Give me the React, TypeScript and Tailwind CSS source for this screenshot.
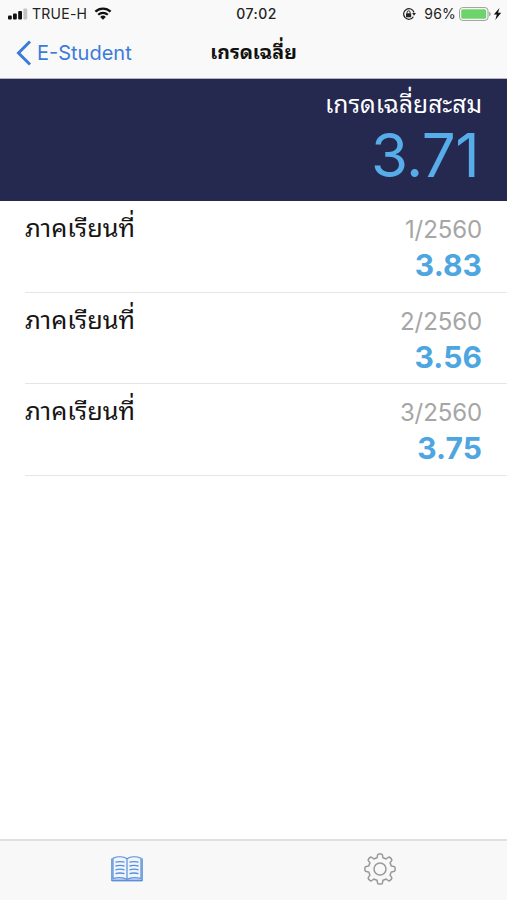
import React from "react";

const latin = "font-['Inter','Liberation_Sans',sans-serif]";
const thai = "font-['Thonburi','Noto_Sans_Thai_Looped','Loma','Garuda','Waree','Umpush','Noto_Sans_Thai',sans-serif]";

const terms = [
  { term: "1/2560", grade: "3.83" },
  { term: "2/2560", grade: "3.56" },
  { term: "3/2560", grade: "3.75" },
];

function Signal() {
  return (
    <svg width="20" height="12" viewBox="0 0 20 12" className="shrink-0">
      <rect x="0" y="7.5" width="3.8" height="4" rx="1" fill="#111" />
      <rect x="5" y="5.5" width="3.8" height="6" rx="1" fill="#111" />
      <rect x="10.2" y="3" width="3.8" height="8.5" rx="1" fill="#111" />
      <rect x="15.4" y="0.5" width="3.8" height="11" rx="1" fill="#c4c4c4" />
    </svg>
  );
}

function Wifi() {
  return (
    <svg width="18" height="13" viewBox="0 0 18 13" className="shrink-0">
      <path d="M1.4 4.7a11 11 0 0 1 15.2 0" fill="none" stroke="#111" strokeWidth="2.3" />
      <path d="M4.2 7.7a7 7 0 0 1 9.6 0" fill="none" stroke="#111" strokeWidth="2.2" />
      <path d="M6.2 9.9a4 4 0 0 1 5.6 0L9 12.7z" fill="#111" />
    </svg>
  );
}

function RotationLock() {
  return (
    <svg width="14" height="14" viewBox="0 0 14 14" className="shrink-0">
      <path d="M11.4 9.8A5.3 5.3 0 1 1 12 5.5" fill="none" stroke="#222" strokeWidth="1.2" />
      <path d="M10.1 6h3.9l-2 2.8z" fill="#222" />
      <rect x="4" y="6.3" width="5.2" height="4" rx="0.5" fill="#222" />
      <path d="M5.1 6.5V5.3a1.5 1.5 0 0 1 3 0v1.2" fill="none" stroke="#222" strokeWidth="1" />
    </svg>
  );
}

function Battery() {
  return (
    <svg width="32" height="14" viewBox="0 0 32 14" className="shrink-0">
      <rect x="0.6" y="0.6" width="28.4" height="12.8" rx="3" fill="#fff" stroke="#9b9b9b" strokeWidth="1" />
      <rect x="2.2" y="2.2" width="25" height="9.6" rx="1.5" fill="#6dd36b" />
      <path d="M30.2 4.7c2 .6 2 4 0 4.6z" fill="#9b9b9b" />
    </svg>
  );
}

function Book() {
  return (
    <svg width="32" height="26" viewBox="0 0 32 26" fill="none" stroke="#5b8fd6">
      <path d="M.8 2.5v22h30.4v-22" fill="#dce9fa" strokeWidth="1.2" />
      <path d="M2 2.2C6.5.2 12.5.2 16 2.8 19.5.2 25.5.2 30 2.2v20.3c-4.5-1-10.5-1-14 .8-3.5-1.8-9.5-1.8-14-.8zM16 2.8v20.5" fill="#eef5fe" strokeWidth="1.2" />
      <path d="M4.5 6.2q4.5-1.2 9 0M4.5 10q4.5-1.2 9 0M4.5 13.8q4.5-1.2 9 0M4.5 17.6q4.5-1.2 9 0M18.5 6.2q4.5-1.2 9 0M18.5 10q4.5-1.2 9 0M18.5 13.8q4.5-1.2 9 0M18.5 17.6q4.5-1.2 9 0" strokeWidth="1.3" />
      <path d="M.8 24.5h30.4" strokeWidth="1.8" />
    </svg>
  );
}

const gearOutline =
  "M13.5 2.2Q13.7.9 15 .9h2Q18.3.9 18.5 2.2L18.9 4.7Q20.7 5.2 22.1 6L24.1 4.5Q25.2 3.7 26.1 4.6L27.4 5.9Q28.3 6.8 27.5 7.9L26 9.9Q26.8 11.3 27.3 13.1L29.8 13.5Q31.1 13.7 31.1 15V17Q31.1 18.3 29.8 18.5L27.3 18.9Q26.8 20.7 26 22.1L27.5 24.1Q28.3 25.2 27.4 26.1L26.1 27.4Q25.2 28.3 24.1 27.5L22.1 26Q20.7 26.8 18.9 27.3L18.5 29.8Q18.3 31.1 17 31.1H15Q13.7 31.1 13.5 29.8L13.1 27.3Q11.3 26.8 9.9 26L7.9 27.5Q6.8 28.3 5.9 27.4L4.6 26.1Q3.7 25.2 4.5 24.1L6 22.1Q5.2 20.7 4.7 18.9L2.2 18.5Q.9 18.3.9 17V15Q.9 13.7 2.2 13.5L4.7 13.1Q5.2 11.3 6 9.9L4.5 7.9Q3.7 6.8 4.6 5.9L5.9 4.6Q6.8 3.7 7.9 4.5L9.9 6Q11.3 5.2 13.1 4.7Z";

function Gear() {
  return (
    <svg width="32" height="32" viewBox="0 0 32 32" fill="none" stroke="#999" strokeWidth="1.5" strokeLinejoin="round">
      <path d={gearOutline} />
      <circle cx="16" cy="16" r="6" />
    </svg>
  );
}

export default function App() {
  return (
    <div className={`flex h-[900px] w-[507px] flex-col overflow-hidden bg-white ${latin}`}>
      <header className="h-[79px] shrink-0 border-b border-[#b5b5c4] bg-[#f9f9f9]">
        <div className="grid h-[27px] grid-cols-[1fr_auto_1fr] items-center pr-[5px] pl-2 text-[#222]">
          <div className="flex items-center">
            <Signal />
            <span className="ml-1 text-[14px] leading-[27px] tracking-[0.25px]">TRUE-H</span>
            <span className="ml-[7px]"><Wifi /></span>
          </div>
          <span className="pl-[3px] text-[14px] leading-[27px] font-medium tracking-[0.5px]">07:02</span>
          <div className="flex items-center justify-end">
            <RotationLock />
            <span className="ml-2 text-[14px] leading-[27px] tracking-[0.2px]">96%</span>
            <span className="ml-[3px]"><Battery /></span>
            <svg width="9" height="14" viewBox="0 0 9 14" className="ml-[2px]">
              <path d="M6.5 1L.8 7.6h3L2.3 13l5.9-7.2H5z" fill="#111" />
            </svg>
          </div>
        </div>
        <div className="grid h-[51px] grid-cols-[1fr_auto_1fr] items-center">
          <div className="flex items-center pl-4 text-[#3b7bd9]">
            <svg width="16" height="26" viewBox="0 0 16 26" fill="none" stroke="currentColor" strokeWidth="3">
              <path d="M14 1.5L2.5 13 14 24.5" />
            </svg>
            <span className="ml-[5px] text-[20px] leading-[26px]">E-Student</span>
          </div>
          <h1 className={`pb-1 text-[19.5px] leading-[26px] font-bold text-[#111] ${thai}`}>เกรดเฉลี่ย</h1>
        </div>
      </header>

      <section className="flex h-[122px] shrink-0 flex-col items-end bg-[#25284f] pt-[5px] pr-[25px]">
        <p className={`text-[24.6px] leading-[36px] text-white ${thai}`}>เกรดเฉลี่ยสะสม</p>
        <p className="pr-[3px] text-[60px] leading-[70px] tracking-[-0.6px] text-[#56ade9]">3.71</p>
      </section>

      <main className="flex-1 pl-[25px]">
        {terms.map((t) => (
          <div key={t.term} className="flex h-[91.7px] justify-between border-b border-[#e6e6e8] pt-[10px] pr-[25px]">
            <span className={`-mt-[3px] text-[25.3px] leading-[36px] text-[#151515] ${thai}`}>ภาคเรียนที่</span>
            <div className="flex flex-col items-end">
              <span className="text-[24px] leading-[37px] tracking-[-0.1px] text-[#a6a6a6]">{t.term}</span>
              <span className="text-[30px] leading-[35px] font-bold tracking-[0.1px] text-[#4da6df]">{t.grade}</span>
            </div>
          </div>
        ))}
      </main>

      <nav className="grid h-[61px] shrink-0 grid-cols-2 items-center justify-items-center border-t-2 border-[#e0e0e0] bg-[#f8f8f8] pb-[3px]">
        <button aria-label="Grades"><Book /></button>
        <button aria-label="Settings"><Gear /></button>
      </nav>
    </div>
  );
}
